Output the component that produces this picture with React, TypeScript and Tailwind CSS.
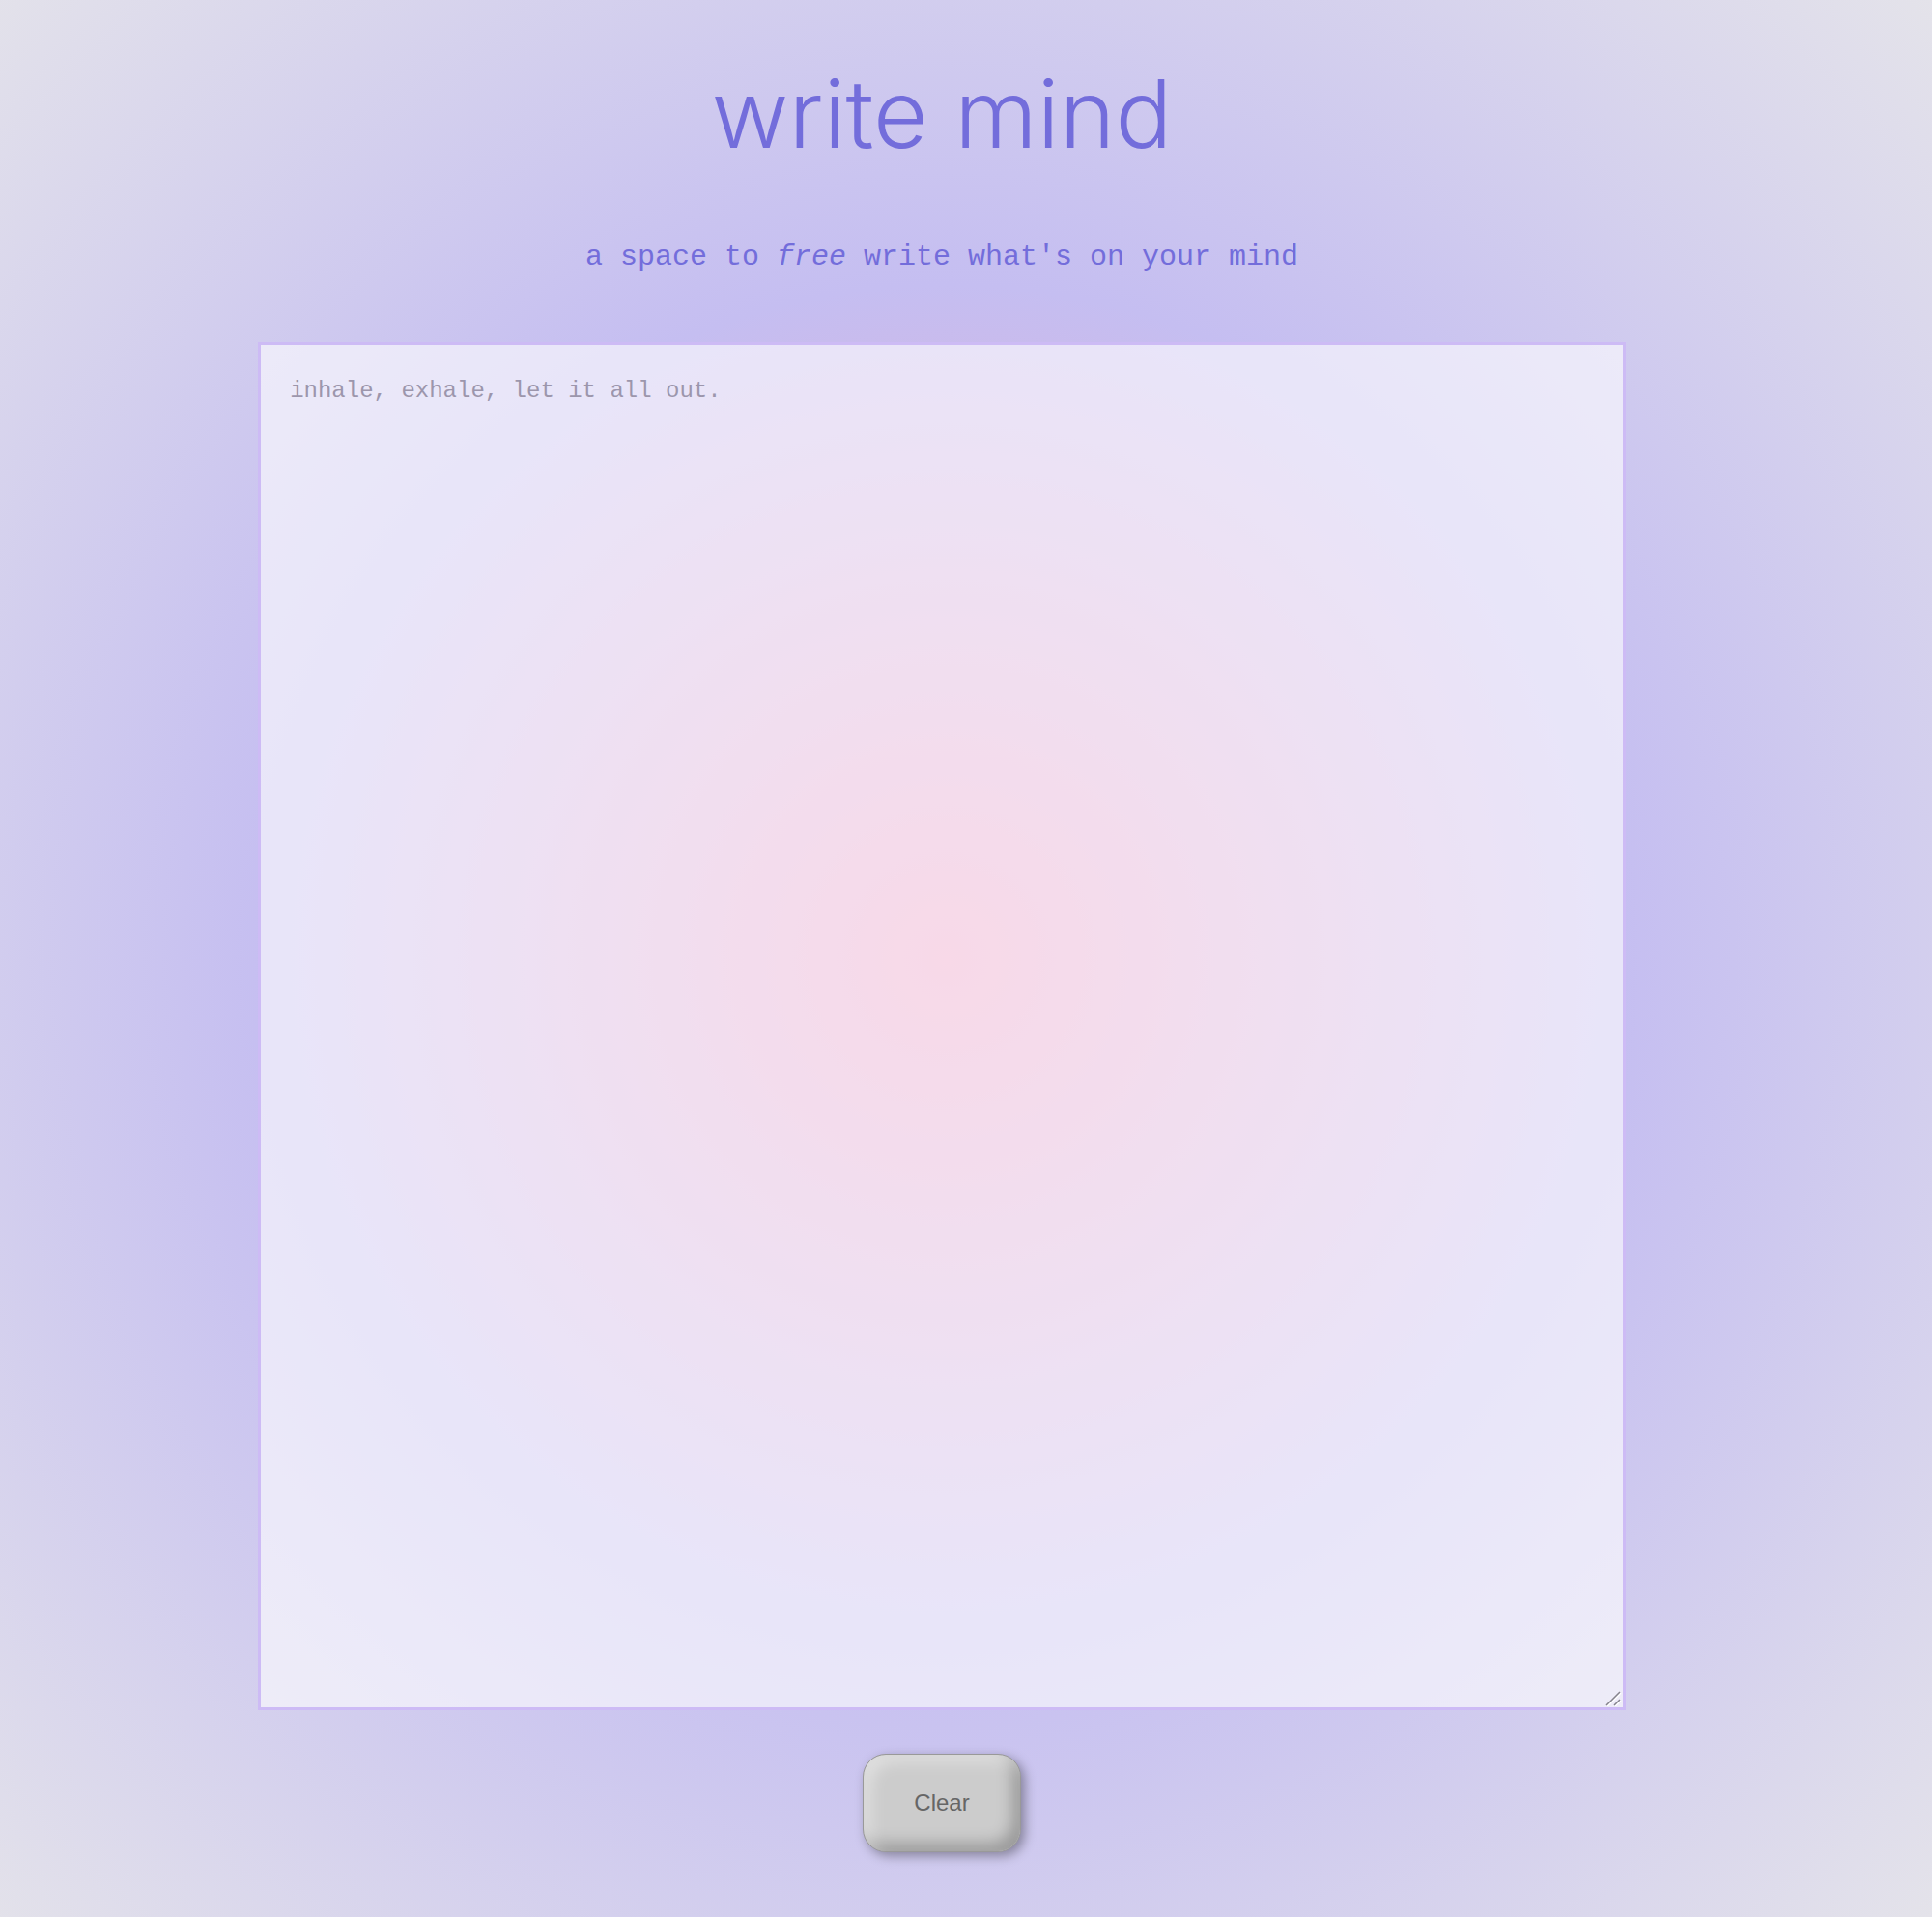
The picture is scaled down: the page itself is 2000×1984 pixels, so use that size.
import { useState } from 'react';

const App = () => {
    const [text, setText] = useState('');

    return (
        <main className="flex min-h-screen flex-col items-center bg-[radial-gradient(circle_at_49%_50%,#eda0c5_0%,#c5bef1_49%,#e4e3ea_100%)] pt-[62px] pr-[50px] pb-12 font-['Liberation_Mono',monospace] text-[#736ddb]">
            <h1 className="font-[Inter,sans-serif] text-[98px] leading-[112px] font-[340]">write mind</h1>

            <p className="mt-[68px] text-[30px] leading-[48px] font-medium">
                a space to <em>free</em> write what's on your mind
            </p>

            <div className="relative mt-16 aspect-square w-[72.6%]">
                <textarea
                    aria-label="Free writing space"
                    placeholder="inhale, exhale, let it all out."
                    value={text}
                    onChange={(e) => setText(e.target.value)}
                    className="block h-full w-full resize-none border-3 border-[#cdbbf5] bg-white/60 p-[30px] text-[24px] leading-9 text-gray-700 outline-none placeholder:text-[#9c96ac]"
                />
                {/* Corner grip */}
                <svg
                    aria-hidden="true"
                    viewBox="0 0 18 18"
                    className="pointer-events-none absolute right-1 bottom-1 size-[18px]"
                    fill="none"
                    strokeWidth="1.5"
                >
                    <path d="M3 18 17 4M11 18l6-6" stroke="#fff" />
                    <path d="M2 17 16 3M10 17l6-6" stroke="#85838c" />
                </svg>
            </div>

            <button
                type="button"
                onClick={() => setText('')}
                className="mt-[45px] rounded-3xl border border-[#999] bg-[#ccc] px-13 py-8 font-['Liberation_Sans',sans-serif] text-[24px] leading-9 text-[#666] shadow-[4px_4px_12px_rgba(0,0,0,0.35),inset_8px_8px_16px_rgba(255,255,255,0.4),inset_-8px_-8px_16px_rgba(0,0,0,0.25)]"
            >
                Clear
            </button>
        </main>
    );
};

export default App;
